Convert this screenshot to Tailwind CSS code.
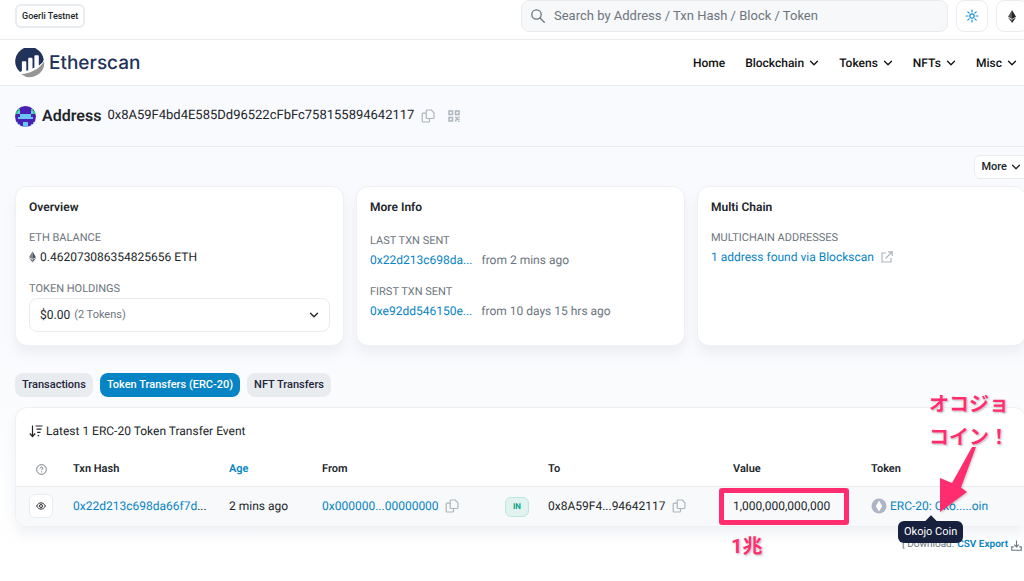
<!DOCTYPE html>
<html lang="en">
<head>
<meta charset="utf-8">
<title>Etherscan – Address</title>
<script src="https://cdn.jsdelivr.net/npm/@tailwindcss/browser@4"></script>
</head>
<body class="min-h-screen overflow-x-hidden bg-white font-['Roboto','Noto_Sans_CJK_JP',sans-serif] text-[12px] leading-5 text-[#212529] [text-rendering:geometricPrecision]">
<svg class="hidden">
  <symbol id="chevron" viewBox="0 0 10 10"><path d="M1.500 3.200 5 6.700l3.500-3.500" fill="none" stroke="currentColor" stroke-width="1.300" stroke-linecap="round" stroke-linejoin="round"/></symbol>
  <symbol id="copy" viewBox="0 0 14 14"><path d="M6.200 1h4l2.800 2.800v4.700a1 1 0 0 1-1 1H6.200a1 1 0 0 1-1-1V2a1 1 0 0 1 1-1ZM5 4.200H2.200a1 1 0 0 0-1 1V12a1 1 0 0 0 1 1h5.300a1 1 0 0 0 1-1V9.700" fill="none" stroke="currentColor" stroke-width="1.200" stroke-linejoin="round"/></symbol>
  <symbol id="eth" viewBox="0 0 10 16"><path d="M5 0 0 8.200 5 11Z" opacity=".75"/><path d="M5 0v11l5-2.800Z"/><path d="M0 9.300 5 16v-3.900Z" opacity=".75"/><path d="M10 9.300 5 16v-3.900Z"/></symbol>
</svg>

<div class="flex h-10 items-start justify-between border-b border-[#e9ecef] pl-[15px]">
  <button class="mt-1 h-6 rounded-md border-2 border-[#e9ecef] px-[5px] text-[9px] leading-4 font-medium">Goerli Testnet</button>
  <div class="-mr-1 flex gap-2">
    <label class="flex h-8 w-[427px] items-center gap-2 rounded-lg border border-[#e9ecef] bg-[#f7f8fa] pl-2 text-[13px] text-[#6c757d]">
      <svg class="size-4" viewBox="0 0 16 16" fill="none" stroke="currentColor" stroke-width="1.300" stroke-linecap="round"><circle cx="6.500" cy="6.500" r="4.700"/><path d="m10 10 4.300 4.300"/></svg>
      <input type="text" aria-label="Search" placeholder="Search by Address / Txn Hash / Block / Token" class="flex-1 bg-transparent outline-none placeholder:text-[#6c757d]">
    </label>
    <button aria-label="Theme" class="flex size-8 items-center justify-center rounded-lg border border-[#e9ecef] text-[#1a94d2]">
      <svg class="size-[14px]" viewBox="0 0 14 14" fill="none" stroke="currentColor" stroke-width="1.200" stroke-linecap="round"><circle cx="7" cy="7" r="2.200"/><path d="M7 1v2M7 11v2M1 7h2M11 7h2M2.800 2.800l1.300 1.300M9.900 9.900l1.300 1.300M2.800 11.200l1.300-1.300M9.900 4.100l1.300-1.300"/></svg>
    </button>
    <button aria-label="Network" class="flex size-8 items-center justify-center rounded-lg border border-[#e9ecef]"><svg class="h-[13px] w-2 fill-[#222]"><use href="#eth"/></svg></button>
  </div>
</div>

<header class="flex h-[46px] items-center justify-between border-b border-[#e9ecef] pr-[7px] pl-[15px]">
  <a href="#" class="flex items-center gap-1 font-['Inter',sans-serif] text-[19px] font-medium text-[#21325b]">
    <svg class="size-[30px]" viewBox="0 0 30 30"><path d="M6.400 23.300a1.400 1.400 0 0 1-1.800.3A14.300 14.300 0 1 1 28.700 11.500c0 2-2 4.200-4.900 6V8.400c0-.7-.4-1.100-1.100-1.100h-2.200c-.7 0-1.100.4-1.100 1.100v11.200l-1.900.9V10.800c0-.7-.4-1.100-1.100-1.100h-2.100c-.7 0-1.100.4-1.100 1.100v11.500l-1.900.5v-8.500c0-.7-.4-1.100-1.100-1.100H8c-.7 0-1.100.4-1.100 1.100v8.200c0 .3-.2.600-.5.800Z" fill="#21325b"/><path d="M6.300 26.200c8.800-.6 17.500-4.700 22.900-12.700A14.400 14.400 0 0 1 6.300 26.200Z" fill="#979695"/></svg>
    <span>Etherscan</span>
  </a>
  <nav class="flex gap-5 font-medium text-[#111] [&_a]:flex [&_a]:items-center [&_a]:gap-[5px]">
    <a href="#">Home</a>
    <a href="#">Blockchain <svg class="size-[10px]"><use href="#chevron"/></svg></a>
    <a href="#">Tokens <svg class="size-[10px]"><use href="#chevron"/></svg></a>
    <a href="#">NFTs <svg class="size-[10px]"><use href="#chevron"/></svg></a>
    <a href="#">Misc <svg class="size-[10px]"><use href="#chevron"/></svg></a>
  </nav>
</header>

<main class="-mr-[2px] bg-linear-to-b from-[#f9fafd] via-[#f9fafd] to-white pb-1 pl-[15px]">
  <div class="flex h-[61px] items-center border-b border-[#e9ecef]">
    <svg class="mr-[6px] size-[21px] rounded-full" viewBox="0 0 8 8" shape-rendering="crispEdges"><path fill="#4a21b5" d="M0 0h8v8H0z"/><path fill="#2fd07c" d="M1 1h1v1H1zM6 1h1v1H6zM0 2h1v1H0zM7 2h1v1H7z"/><path fill="#6cc5f5" d="M1 2h1v1H1zM6 2h1v1H6zM2 3h4v1H2zM1 4h6v1H1zM0 6h1v1H0zM7 6h1v1H7zM3 6h2v2H3zM0 7h2v1H0zM6 7h2v1H6z"/></svg>
    <h1 class="text-[16px] font-semibold">Address</h1>
    <span class="ml-[6px] text-[13px]">0x8A59F4bd4E585Dd96522cFbFc758155894642117</span>
    <button aria-label="Copy address" class="ml-[7px] text-[#adb5bd]"><svg class="size-[14px]"><use href="#copy"/></svg></button>
    <button aria-label="QR code" class="ml-[13px] text-[#adb5bd]"><svg class="size-3" viewBox="0 0 12 12" fill="none" stroke="currentColor" stroke-width="1.500"><path d="M1 1h3.500v3.500H1zM7.500 1H11v3.500H7.500zM1 7.500h3.500V11H1z"/><path d="M7 7.500h2v2h2.500M11 6.500V8M7.700 9.500v2M10 11.500h1.500"/></svg></button>
  </div>

  <div class="flex justify-end pt-2">
    <button class="-mr-1 flex h-6 items-center gap-1 rounded-md border border-[#e9ecef] bg-white pr-2 pl-[6px] text-[11px] font-medium">More <svg class="size-[10px]"><use href="#chevron"/></svg></button>
  </div>

  <div class="mt-[7px] grid grid-cols-3 gap-3 *:h-40 *:rounded-xl *:border *:border-[#eef0f3] *:bg-white *:px-[13px] *:pt-[10px] *:shadow-[0_8px_12px_rgba(189,197,209,0.2)]">
    <section>
      <h2 class="font-semibold">Overview</h2>
      <h3 class="mt-[13px] text-[11px] leading-4 text-[#6c757d]">ETH BALANCE</h3>
      <p class="mt-[2px] flex items-center gap-1 leading-[18px]"><svg class="h-3 w-[7px] fill-[#4d5660]"><use href="#eth"/></svg>0.462073086354825656 ETH</p>
      <h3 class="mt-[15px] text-[11px] leading-4 text-[#6c757d]">TOKEN HOLDINGS</h3>
      <button class="mt-px flex h-[34px] w-full items-center rounded-lg border border-[#e9ecef] px-[10px]">$0.00 <span class="ml-1 text-[11px] text-[#6c757d]">(2 Tokens)</span><svg class="ml-auto size-[10px]"><use href="#chevron"/></svg></button>
    </section>
    <section>
      <h2 class="font-semibold">More Info</h2>
      <h3 class="mt-4 text-[11px] leading-4 text-[#6c757d]">LAST TXN SENT</h3>
      <p class="mt-[2px] leading-[18px] text-[#6c757d]"><a href="#" class="mr-[6px] text-[#0784c3]">0x22d213c698da...</a> from 2 mins ago</p>
      <h3 class="mt-[15px] text-[11px] leading-4 text-[#6c757d]">FIRST TXN SENT</h3>
      <p class="mt-[2px] leading-[18px] text-[#6c757d]"><a href="#" class="mr-[6px] text-[#0784c3]">0xe92dd546150e...</a> from 10 days 15 hrs ago</p>
    </section>
    <section>
      <h2 class="font-semibold">Multi Chain</h2>
      <h3 class="mt-[13px] text-[11px] leading-4 text-[#6c757d]">MULTICHAIN ADDRESSES</h3>
      <a href="#" class="mt-[2px] flex items-center gap-[7px] leading-[18px] text-[#0784c3]">1 address found via Blockscan <svg class="size-3 text-[#adb5bd]" viewBox="0 0 12 12" fill="none" stroke="currentColor" stroke-width="1.200"><path d="M5 2H1v9h9V7M7 .8h4.200V5M11 1 4.500 7.500"/></svg></a>
    </section>
  </div>

  <div class="mt-[27px] flex gap-[7px] text-[11px] font-medium *:h-6 *:rounded-lg *:px-[7px]">
    <button class="bg-[#e9ecef] text-[#21253b]">Transactions</button>
    <button class="bg-[#0784c3] text-white">Token Transfers (ERC-20)</button>
    <button class="bg-[#e9ecef] text-[#21253b]">NFT Transfers</button>
  </div>

  <section class="relative mt-[10px] rounded-xl border border-[#eef0f3] bg-white shadow-[0_8px_12px_rgba(189,197,209,0.2)]">
    <p class="flex items-center gap-[3px] px-[13px] pt-[13px]"><svg class="size-[14px]" viewBox="0 0 14 14" fill="none" stroke="currentColor" stroke-width="1.200"><path d="M3.500 1.500v11M.8 9.500l2.700 3 2.700-3M6.500 2h7M7.500 5.200h5M8.200 8.400h3.300M8.700 11.700h1.500"/></svg>Latest 1 ERC-20 Token Transfer Event</p>
    <table class="mt-3 w-full table-fixed text-left whitespace-nowrap">
      <colgroup><col class="w-[57px]"><col class="w-[156px]"><col class="w-[93px]"><col class="w-[183px]"><col class="w-[43px]"><col class="w-[185px]"><col class="w-[138px]"><col></colgroup>
      <thead class="text-[11px] [&_th]:h-[33px] [&_th]:font-semibold">
        <tr>
          <th class="pl-5"><svg class="size-[11px] text-[#6c757d]" viewBox="0 0 12 12" fill="none" stroke="currentColor"><circle cx="6" cy="6" r="5.300"/><path d="M4.500 4.800c0-2 3-1.900 3-.2 0 1-1.500 1.100-1.500 2.200M6 8v1.100"/></svg></th>
          <th>Txn Hash</th><th><a href="#" class="text-[#0784c3]">Age</a></th><th>From</th><th></th><th>To</th><th>Value</th><th>Token</th>
        </tr>
      </thead>
      <tbody>
        <tr class="h-10 border-t border-[#e9ecef] bg-[#f8f9fa]">
          <td class="rounded-bl-xl pl-[13px]"><button aria-label="View details" class="flex size-6 items-center justify-center rounded-md border border-[#e9ecef] bg-white"><svg class="h-2 w-[10px]" viewBox="0 0 10 8" fill="none" stroke="currentColor"><path d="M.6 4C2.800-.2 7.200-.2 9.400 4 7.200 8.200 2.800 8.200.6 4Z"/><circle cx="5" cy="4" r="1.500"/></svg></button></td>
          <td><a href="#" class="text-[#0784c3]">0x22d213c698da66f7d</a>...</td>
          <td>2 mins ago</td>
          <td><span class="flex items-center gap-[6px]"><a href="#" class="text-[#0784c3]">0x000000...00000000</a><button aria-label="Copy sender" class="text-[#adb5bd]"><svg class="size-[14px]"><use href="#copy"/></svg></button></span></td>
          <td><span class="inline-flex h-5 w-6 items-center justify-center rounded-md border border-[#bfe6dc] bg-[#e0f3ef] text-[8px] font-bold text-[#00a186]">IN</span></td>
          <td><span class="flex items-center gap-[6px]">0x8A59F4...94642117<button aria-label="Copy recipient" class="text-[#adb5bd]"><svg class="size-[14px]"><use href="#copy"/></svg></button></span></td>
          <td><div class="relative">1,000,000,000,000
            <div class="absolute -top-2 -left-[14px] h-[37px] w-[130px] rounded-[3px] border-[5px] border-[#ff2d6f]"></div>
            <div class="absolute top-[38px] -left-[2px] text-[20px] leading-6 font-bold text-[#ff2d6f] [text-shadow:0_0_2px_#fff,1px_1px_2px_#aaa]">1兆</div>
          </div></td>
          <td><div class="relative flex items-center gap-[3px]">
            <svg class="size-4" viewBox="0 0 16 16"><circle cx="8" cy="8" r="7.500" fill="#adb5c5"/><path d="m8 2.500 3.200 5.700L8 13.500 4.800 8.200Z" fill="#fff"/></svg>
            <a href="#" class="text-[#0784c3]">ERC-20: Oko.....oin</a>
            <div role="tooltip" class="absolute top-[25px] left-[27px] z-10 rounded-md bg-[#17203c] px-[6px] py-[2px] text-[11px] leading-[18px] text-white before:absolute before:-top-1 before:left-1/2 before:size-2 before:-translate-x-1/2 before:rotate-45 before:bg-[#17203c]">Okojo Coin</div>
            <svg class="absolute -top-[54px] left-[66px] z-20 h-[70px] w-10 drop-shadow-[1px_1px_1px_rgba(0,0,0,0.2)]" viewBox="0 0 40 70"><path d="M35 5h4L24 45.500l6 4.500L3 70V36l12 5Z" fill="#ff2d6f"/></svg>
            <p class="absolute -top-[108px] left-[58px] z-20 text-[20px] leading-[33px] font-bold text-[#ff2d6f] [text-shadow:0_0_2px_#fff,1px_1px_2px_#aaa]">オコジョ<br>コイン！</p>
          </div></td>
        </tr>
      </tbody>
    </table>
  </section>
  <div class="mt-2 flex items-center justify-end gap-[3px] pr-1 text-[10px] text-[#6c757d]">[ Download: <a href="#" class="flex items-center gap-[3px] font-semibold text-[#0784c3]">CSV Export <svg class="size-[11px] text-[#6c757d]" viewBox="0 0 12 12" fill="none" stroke="currentColor" stroke-width="1.200"><path d="M6 .5v7M3.500 5 6 7.500 8.500 5M3 7.500H.8v3.700h10.400V7.500H9"/></svg></a></div>
</main>
</body>
</html>
